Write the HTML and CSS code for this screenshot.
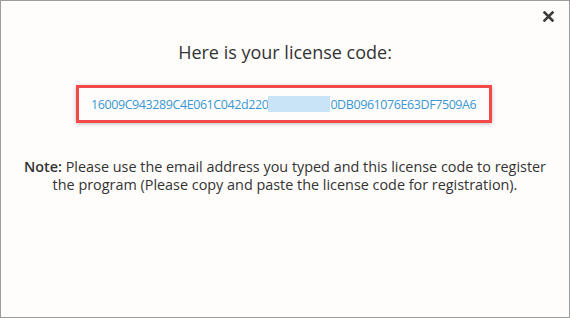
FILE: index.html
```html
<!DOCTYPE html>
<html lang="en">
<head>
    <meta charset="UTF-8">
    <title>License Code</title>
    <link rel="stylesheet" href="styles.css">
</head>
<body>

    <div class="dialog">
        <button class="close" aria-label="Close">
            <svg width="11" height="11" viewBox="0 0 11 11">
                <path d="M1.5 1.5 L9.5 9.5 M9.5 1.5 L1.5 9.5" stroke="#3c3c3c" stroke-width="2.6" stroke-linecap="square"/>
            </svg>
        </button>

        <h2 class="title">Here is your license code:</h2>

        <div class="code-box">
            <span class="code">16009C943289C4E061C042d220<span class="masked"></span>0DB0961076E63DF7509A6</span>
        </div>

        <p class="note"><strong>Note:</strong> Please use the email address you typed and this license code to register the program (Please copy and paste the license code for registration).</p>
    </div>

</body>
</html>
```

FILE: styles.css
```css
html, body {
    margin: 0;
    padding: 0;
}

body {
    font-family: 'Open Sans', sans-serif;
    background-color: #fefdfb;
    color: #333333;
}

.dialog {
    box-sizing: border-box;
    width: 570px;
    height: 318px;
    border: 1px solid #9c9c9c;
    position: relative;
    display: flex;
    flex-direction: column;
    align-items: center;
    padding-top: 38px;
}

.close {
    position: absolute;
    top: 9px;
    right: 15px;
    background: none;
    border: none;
    padding: 0;
    cursor: pointer;
}

.title {
    font-size: 18px;
    font-weight: 400;
    margin: 0;
    line-height: 26px;
    color: #333333;
}

.code-box {
    margin-top: 20px;
    width: 416px;
    height: 38px;
    box-sizing: border-box;
    border: 3px solid #f24a4a;
    box-shadow: 0 1px 4px rgba(0, 0, 0, 0.25);
    display: flex;
    align-items: center;
    padding-left: 12px;
    margin-left: -2px;
}

.code {
    font-size: 12.5px;
    letter-spacing: -0.42px;
    color: #3a97d4;
    display: flex;
    align-items: center;
}

.masked {
    display: inline-block;
    width: 62px;
    height: 16px;
    background-color: #c9e4f4;
}

.note {
    margin: 35px 0 0;
    font-size: 14.4px;
    line-height: 18px;
    text-align: center;
    width: 536px;
}

.note strong {
    font-weight: 600;
}
```
